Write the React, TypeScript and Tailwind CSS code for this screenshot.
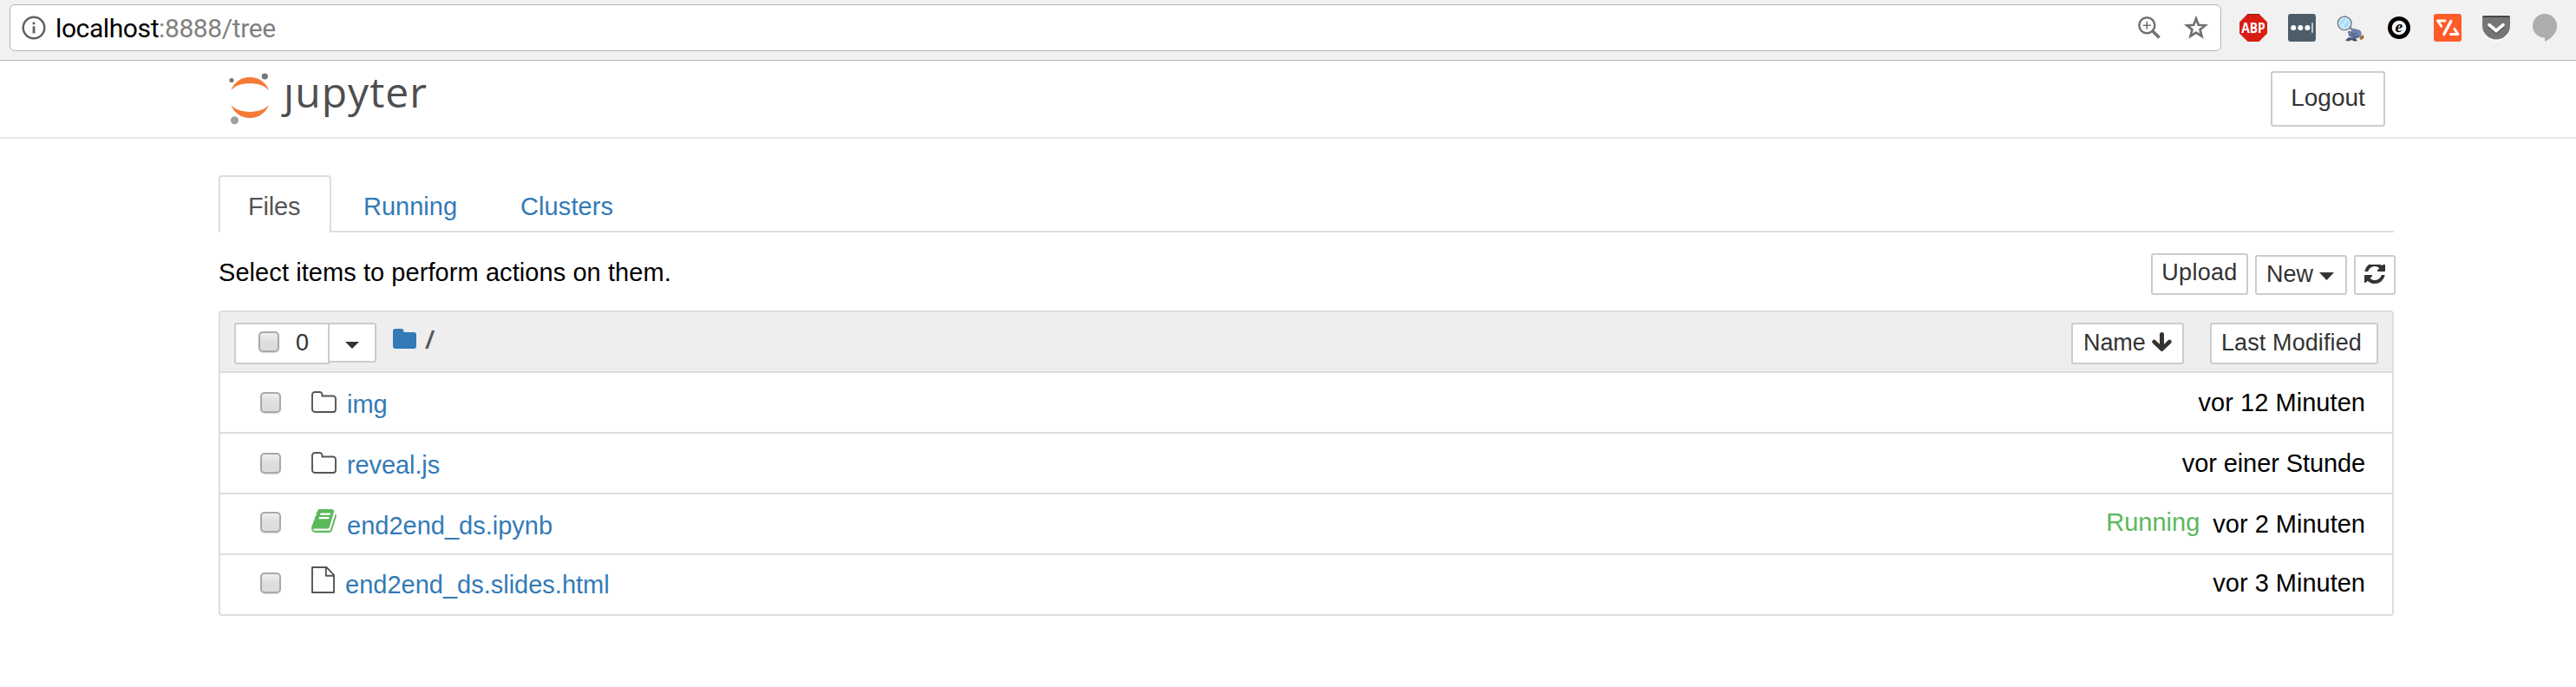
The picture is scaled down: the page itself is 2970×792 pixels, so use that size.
import type { ReactNode } from "react";

const BOOK_PATH =
  "M1703 478q40 57 18 129l-275 906q-19 64-76.5 107.5t-122.5 43.5h-923q-77 0-148.5-53.5t-99.5-131.5q-24-67-2-127 0-4 3-27t4-37q1-8-3-21.5t-3-19.5q2-11 8-21t16.5-23.5 16.5-23.5q23-38 45-91.5t30-91.5q3-10 .5-30t-.5-28q3-11 17-28t17-23q21-36 42-92t25-90q1-9-2.5-32t.5-28q4-13 22-30.5t22-22.5q19-26 42.5-84.5t27.5-96.5q1-8-3-25.5t-2-26.5q2-8 9-18t18-23 17-21q8-12 16.5-30.5t15-35 16-36 19.5-32 26.5-23.5 36-11.5 47.5 5.5l-1 3q38-9 51-9h761q74 0 114 56t18 130l-274 906q-36 119-71.5 153.5t-128.5 34.5h-869q-27 0-38 15-11 16-1 43 24 70 144 70h923q29 0 56-15.5t35-41.5l300-987q7-22 5-57 38 15 59 43zm-1064 2q-4 13 2 22.5t20 9.5h608q13 0 25.5-9.5t16.5-22.5l21-64q4-13-2-22.5t-20-9.5h-608q-13 0-25.5 9.5t-16.5 22.5zm-83 256q-4 13 2 22.5t20 9.5h608q13 0 25.5-9.5t16.5-22.5l21-64q4-13-2-22.5t-20-9.5h-608q-13 0-25.5 9.5t-16.5 22.5z";

const REFRESH_PATH =
  "M1511 928q0 5-1 7-64 268-268 434.5t-478 166.5q-146 0-282.5-55t-243.5-157l-129 129q-19 19-45 19t-45-19-19-45v-448q0-26 19-45t45-19h448q26 0 45 19t19 45-19 45l-137 137q71 66 161 102t187 36q134 0 250-65t186-179q11-17 53-117 8-23 30-23h192q13 0 22.5 9.5t9.5 22.5zm25-800v448q0 26-19 45t-45 19h-448q-26 0-45-19t-19-45 19-45l138-138q-148-137-349-137-134 0-250 65t-186 179q-11 17-53 117-8 23-30 23h-199q-13 0-22.5-9.5t-9.5-22.5v-7q65-268 270-434.5t480-166.5q146 0 284 55.5t245 156.5l130-129q19-19 45-19t45 19 19 45z";

function Checkbox() {
  return (
    <span className="block size-6 shrink-0 rounded-[5px] border-2 border-[#a9a9a9] bg-gradient-to-b from-[#efefef] via-[#dddddd] to-[#dddddd] shadow-[0_1px_1px_rgba(0,0,0,0.15)]" />
  );
}

function Caret({ className }: { className: string }) {
  return (
    <svg viewBox="0 0 16 8" preserveAspectRatio="none" className={className}>
      <path d="M0 0h16L8 8z" fill="#333" />
    </svg>
  );
}

function InfoIcon() {
  return (
    <svg viewBox="0 0 28 28" className="size-7" fill="none">
      <circle cx="14" cy="14" r="12.3" stroke="#5f6368" strokeWidth="2.5" />
      <path d="M12.600 7.400h2.800v2.800h-2.800zM12.600 12.200h2.800v8.200h-2.800z" fill="#5f6368" />
    </svg>
  );
}

function MagnifierIcon() {
  return (
    <svg viewBox="0 0 26 26" className="size-[26px]" fill="none" stroke="#6e7175">
      <circle cx="10.3" cy="10.3" r="9" strokeWidth="2.5" />
      <path d="M17 17l7.6 7.6" strokeWidth="3.6" />
      <path d="M10.3 5.8v9M5.800 10.300h9" strokeWidth="1.600" />
    </svg>
  );
}

function StarIcon() {
  return (
    <svg viewBox="0 0 28 28" className="size-7" fill="none">
      <path
        d="M14 3.600l2.800 7.200 7.700.5-6 4.900 2 7.500-6.500-4.200-6.500 4.200 2-7.500-6-4.900 7.700-.5z"
        stroke="#6e7175"
        strokeWidth="2.700"
      />
    </svg>
  );
}

function AdblockIcon() {
  return (
    <svg viewBox="0 0 32 32" className="size-8 overflow-visible">
      <path d="M9.500 0h13l9.500 9.500v13L22.500 32h-13L0 22.500v-13z" fill="#d81e14" />
      <path d="M9.500 0h13l1 1h-15z" fill="#8e1a14" />
      <text
        x="2.300"
        y="22"
        textLength="27.500"
        lengthAdjust="spacingAndGlyphs"
        fontSize="16.500"
        fontWeight="700"
        fill="#fff"
        className="font-['Open_Sans',sans-serif]"
      >
        ABP
      </text>
    </svg>
  );
}

function PasswordIcon() {
  return (
    <svg viewBox="0 0 32 32" className="size-8">
      <rect width="32" height="32" rx="3" fill="#4e5d69" />
      <circle cx="6.200" cy="16" r="3" fill="#fff" />
      <circle cx="14.300" cy="16" r="3" fill="#fff" />
      <circle cx="22.400" cy="16" r="3" fill="#fff" />
      <path d="M28 10.300v11.500" stroke="#fff" strokeWidth="1.300" />
    </svg>
  );
}

function DetectiveIcon() {
  return (
    <svg viewBox="0 0 32 30" className="h-[30px] w-8">
      <path d="M15 13.500l5 4" stroke="#8a8178" strokeWidth="2.400" />
      <circle cx="9.200" cy="8.800" r="7.700" fill="#a4dcf6" stroke="#75808d" strokeWidth="1.700" />
      <circle cx="9.200" cy="8.800" r="6.300" fill="none" stroke="#e9f4f9" strokeWidth="1.200" />
      <path d="M6 12.500l6-7.500" stroke="#cdeefb" strokeWidth="2.600" />
      <path d="M12.800 19.500c.3-2 2-2.500 3.500-1.500l2.500-2c1-1.600 3-1.600 4 0 3-.5 5 .8 5.700 3.500.5 3-1 6-4 6.500h-5l-5-2.500z" fill="#6f84ad" />
      <path d="M17 19.500l2 2.500 4-2M14 22.500l6 2 5-1" stroke="#4c5b7e" strokeWidth="1.300" fill="none" />
      <path d="M10 28.500l4-3.500 8 1 2 3-3 .800-4-1.800-3 1.500z" fill="#48536e" />
      <path d="M27.500 24l3.200-2 .8 3.500-3 2.500-2-1z" fill="#a9602f" />
    </svg>
  );
}

function GhostIcon() {
  return (
    <svg viewBox="0 0 26 26" className="size-[26px] overflow-visible">
      <circle cx="13" cy="13" r="13" fill="#000" />
      <circle cx="13" cy="13" r="8.300" fill="#f4f4f4" />
      <text
        x="8.600"
        y="18"
        fontSize="19.500"
        fontWeight="700"
        fontStyle="italic"
        className="font-['Liberation_Serif',serif]"
      >
        e
      </text>
    </svg>
  );
}

function OrangeIcon() {
  return (
    <svg viewBox="0 0 32 32" className="size-8" fill="none">
      <rect width="32" height="32" rx="3" fill="#ff5c28" />
      <g stroke="#fff" strokeLinecap="round" strokeLinejoin="round">
        <path d="M19.800 8.500l-8 15" strokeWidth="3.400" />
        <path d="M13 8H4.500l4.300 6.300" strokeWidth="2.900" />
        <path d="M19.500 23.500h8.500L23.800 17.200" strokeWidth="2.900" />
      </g>
    </svg>
  );
}

function PocketIcon() {
  return (
    <svg viewBox="0 0 32 29" className="h-[29px] w-8" fill="none">
      <path d="M0 3a2 2 0 0 1 2-2h28a2 2 0 0 1 2 2v10a16 16 0 0 1-32 0z" fill="#fff" />
      <path d="M0 2a2 2 0 0 1 2-2h28a2 2 0 0 1 2 2v9.500a16 16 0 0 1-32 0z" fill="#757575" />
      <path d="M.500 1.200h31" stroke="#3c3c3c" strokeWidth="1.600" />
      <path d="M8 12l8 6.700 8-6.700" stroke="#444" strokeWidth="3.800" strokeLinecap="round" />
      <path d="M8 10.700l8 6.800 8-6.800" stroke="#fff" strokeWidth="3.800" strokeLinecap="round" />
    </svg>
  );
}

function BubbleIcon() {
  return (
    <svg viewBox="0 0 28 32" className="h-8 w-7">
      <path d="M14 0a14 13.800 0 0 1 14 13.800c0 8-5.500 14-14 18.200v-4.400a14 13.800 0 0 1 0-27.600z" fill="#adadad" />
    </svg>
  );
}

function BrowserBar() {
  return (
    <div className="flex h-[70px] items-start border-b border-[#b4b4b4] bg-[#f1f1f1]">
      <div className="ml-[11px] mt-[5px] flex h-[54px] w-[2550px] shrink-0 items-center rounded-[6px] border border-[#b4b4b4] bg-white pl-[13px] pr-[14px]">
        <InfoIcon />
        <div className="ml-[11px] grow pt-px font-['Roboto',sans-serif] text-[30px] leading-[52px] tracking-[-0.4px] text-black">
          localhost<span className="text-[#808080]">:8888/tree</span>
        </div>
        <MagnifierIcon />
        <div className="ml-[27px]">
          <StarIcon />
        </div>
      </div>
      <div className="ml-[21px] mt-4 flex h-8 items-center">
        <AdblockIcon />
        <div className="ml-6"><PasswordIcon /></div>
        <div className="ml-6 pt-0.5"><DetectiveIcon /></div>
        <div className="ml-[27px]"><GhostIcon /></div>
        <div className="ml-[27px]"><OrangeIcon /></div>
        <div className="ml-6"><PocketIcon /></div>
        <div className="ml-[26px]"><BubbleIcon /></div>
      </div>
    </div>
  );
}

function JupyterLogo() {
  return (
    <div className="flex items-start">
      <svg viewBox="264 84 47 60" className="mt-[14px] h-[60px] w-[47px]">
        <circle cx="267" cy="92.500" r="2.600" fill="#767677" />
        <circle cx="305.300" cy="88" r="3.600" fill="#767677" />
        <circle cx="270.500" cy="138.700" r="4.500" fill="#9e9e9e" />
        <path d="M266.300 104.300C270 94.500 278 89 288.100 89s18.200 5.500 21.900 15.300C305.500 98.800 298 96.200 288.100 96.200s-17.300 2.600-21.800 8.100z" fill="#f37b35" />
        <path d="M266.300 120.800C270 130.600 278 136 288.100 136s18.200-5.400 21.900-15.200c-4.500 5.500-12 8.100-21.900 8.100s-17.300-2.600-21.800-8.100z" fill="#f37b35" />
      </svg>
      <div className="ml-[16px] flex font-['Open_Sans',sans-serif] text-[48px] leading-[72px] tracking-[1.05px] text-[#4e4e4e]">
        <span className="[clip-path:inset(28px_0_0_-12px)]">j</span>
        <span>upyter</span>
      </div>
    </div>
  );
}

function Button({ className, children }: { className: string; children: ReactNode }) {
  return (
    <button
      className={`flex shrink-0 whitespace-nowrap rounded-[3px] border-2 border-[#ccc] bg-white text-[#333] ${className}`}
    >
      {children}
    </button>
  );
}

function FolderOutline() {
  return (
    <svg viewBox="0 0 29 25" className="h-[25px] w-[29px]" fill="none">
      <path
        d="M1 4a3 3 0 0 1 3-3h5.500a3 3 0 0 1 3 3v1.500H25a3 3 0 0 1 3 3V21a3 3 0 0 1-3 3H4a3 3 0 0 1-3-3z"
        stroke="#555"
        strokeWidth="1.900"
      />
    </svg>
  );
}

function FileOutline() {
  return (
    <svg viewBox="0 0 27 31" className="h-[31px] w-[27px]" fill="none" stroke="#555" strokeWidth="1.900">
      <path d="M1 1h16.500L26 9.800V30H1zM16.800 1v9.700H26" strokeLinejoin="round" />
    </svg>
  );
}

function BookIcon() {
  return (
    <svg viewBox="60 128 1676 1540" preserveAspectRatio="none" className="h-[27px] w-[29px]">
      <path d={BOOK_PATH} fill="#5cb85c" />
    </svg>
  );
}

type Row = {
  name: string;
  modified: string;
  icon: ReactNode;
  running?: boolean;
  box: string;
  iconPad: string;
  link: string;
  date: string;
};

const rows: Row[] = [
  { name: "img", modified: "vor 12 Minuten", icon: <FolderOutline />, box: "pt-[22px]", iconPad: "pt-[21px]", link: "pl-[12px] leading-[72px]", date: "leading-[68px] tracking-[0.05px]" },
  { name: "reveal.js", modified: "vor einer Stunde", icon: <FolderOutline />, box: "pt-[22px]", iconPad: "pt-[21px]", link: "pl-[12px] leading-[72px] tracking-[-0.1px]", date: "leading-[68px] tracking-[-0.1px]" },
  { name: "end2end_ds.ipynb", modified: "vor 2 Minuten", icon: <BookIcon />, running: true, box: "pt-5", iconPad: "pt-[17px]", link: "pl-[12px] leading-[72px]", date: "leading-[68px]" },
  { name: "end2end_ds.slides.html", modified: "vor 3 Minuten", icon: <FileOutline />, box: "pt-5", iconPad: "pt-[13px]", link: "pl-[12px] leading-[68px]", date: "leading-[64px]" },
];

function FileRow({ row }: { row: Row }) {
  return (
    <div className="flex h-[70px] items-start overflow-hidden border-t-2 border-[#ddd] pl-[46px] pr-[31px] text-[29px] first:h-[68px] first:border-t-0">
      <div className={row.box}>
        <Checkbox />
      </div>
      <div className={`ml-[35px] ${row.iconPad}`}>{row.icon}</div>
      <a className={`grow text-[#337ab7] ${row.link}`}>{row.name}</a>
      {row.running && <span className="mr-[15px] leading-[64px] text-[#5cb85c]">Running</span>}
      <span className={`text-black ${row.date}`}>{row.modified}</span>
    </div>
  );
}

export default function App() {
  return (
    <div className="h-[792px] w-[2970px] overflow-hidden bg-white font-['Liberation_Sans',Arial,sans-serif]">
      <BrowserBar />
      <header className="flex h-[90px] items-start justify-between border-b-2 border-[#e7e7e7] pl-[264px] pr-[220px]">
        <JupyterLogo />
        <Button className="mt-3 h-16 w-[132px] justify-center text-[28px] leading-[57px]">Logout</Button>
      </header>

      <main className="ml-[252px] w-[2510px]">
        <nav className="mt-[42px] flex h-[66px] w-[2508px] text-[29px] leading-[68px] text-[#337ab7]">
          <a className="w-[130px] rounded-t-[4px] border-2 border-b-0 border-[#ddd] pl-[32px] tracking-[-0.2px] text-[#555]">Files</a>
          <div className="flex grow border-b-2 border-[#ddd] pt-[2px]">
            <a className="w-[182px] pl-[37px]">Running</a>
            <a className="pl-[36px] tracking-[0.1px]">Clusters</a>
          </div>
        </nav>

        <div className="flex h-[90px] items-start justify-between">
          <p className="mt-4 text-[29px] leading-[60px] tracking-[0.07px] text-black">
            Select items to perform actions on them.
          </p>
          <div className="mt-6 flex items-end gap-2">
            <Button className="h-12 w-28 justify-center text-[27px] tracking-[0.3px] leading-[41px]">Upload</Button>
            <Button className="h-[46px] w-[106px] pl-[11px] text-[27px] leading-[41px]">
              New
              <Caret className="ml-[7px] mt-[18px] h-[9px] w-[17px]" />
            </Button>
            <Button className="h-[46px] w-12 justify-center pt-[9px]">
              <svg viewBox="0 128 1536 1536" className="size-6">
                <path d={REFRESH_PATH} fill="#333" />
              </svg>
            </Button>
          </div>
        </div>

        <section className="h-[352px] w-[2508px] overflow-hidden rounded-[4px] border-2 border-[#ddd]">
          <div className="flex h-[68px] items-start bg-[#eee] pl-4 pr-4 pt-3">
            <Button className="h-12 w-[110px] rounded-r-none pl-[26px] text-[27px] leading-[42px]">
              <span className="pt-2"><Checkbox /></span>
              <span className="ml-[19px]">0</span>
            </Button>
            <Button className="-ml-0.5 h-[46px] w-14 justify-center rounded-l-none pt-5">
              <Caret className="h-2 w-4" />
            </Button>
            <svg viewBox="0 0 27 23" className="ml-[19px] mt-[7px] h-[23px] w-[27px]">
              <path d="M0 3a3 3 0 0 1 3-3h6.500a3 3 0 0 1 3 3v1H24a3 3 0 0 1 3 3v13a3 3 0 0 1-3 3H3a3 3 0 0 1-3-3z" fill="#337ab7" />
            </svg>
            <span className="ml-[10px] grow font-['Open_Sans',sans-serif] text-[29px] font-semibold leading-[37px] text-[#555]">/</span>
            <Button className="h-12 w-[130px] pl-[12px] text-[27px] leading-[42px] tracking-[-0.1px]">
              Name
              <svg viewBox="0 0 23 22" className="ml-[7px] mt-[9px] h-[22px] w-[23px]" fill="none" stroke="#333" strokeLinecap="round">
                <path d="M11.500 2.500v15" strokeWidth="5" />
                <path d="M2.600 11l8.900 8.500 8.900-8.500" strokeWidth="4.600" />
              </svg>
            </Button>
            <Button className="ml-[30px] h-12 w-[194px] pl-[11px] text-[27px] tracking-[0.1px] leading-[42px]">Last Modified</Button>
          </div>
          <div className="border-t-2 border-[#ddd]">
            {rows.map((row) => (
              <FileRow key={row.name} row={row} />
            ))}
          </div>
        </section>
      </main>
    </div>
  );
}
